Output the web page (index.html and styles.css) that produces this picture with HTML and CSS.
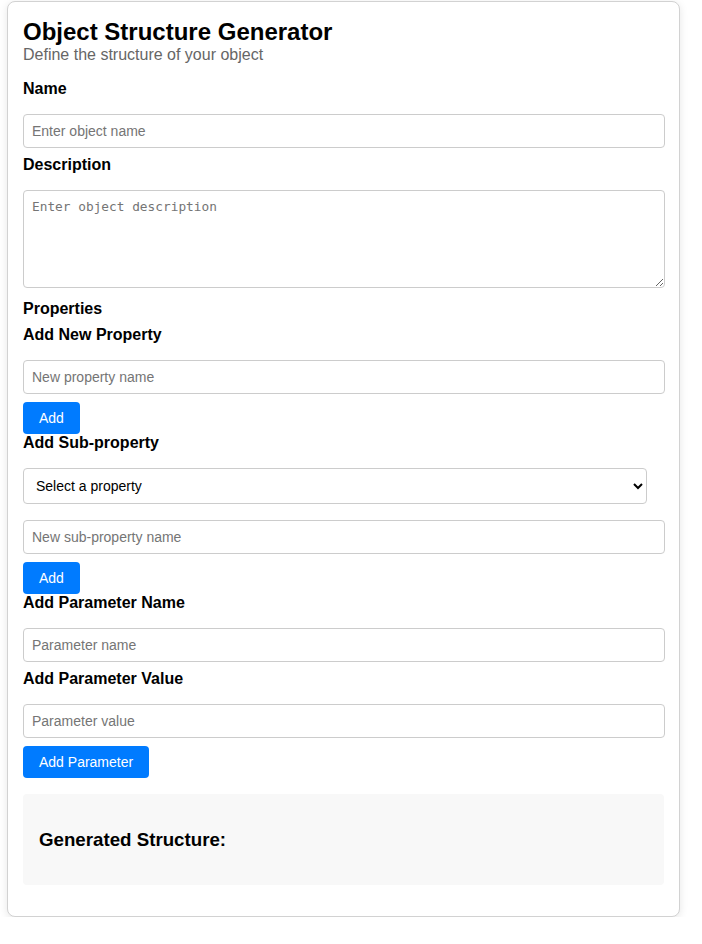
FILE: index.html
```html
<!DOCTYPE html>
<html lang="en">
<head>
<meta charset="utf-8">
<title>Object Structure Generator</title>
<link rel="stylesheet" href="styles.css">
</head>
<body>
<div class="card">
  <h1 class="title">Object Structure Generator</h1>
  <p class="subtitle">Define the structure of your object</p>

  <label class="label" for="name">Name</label>
  <input class="field" id="name" type="text" placeholder="Enter object name">

  <label class="label" for="desc">Description</label>
  <textarea class="field area" id="desc" placeholder="Enter object description"></textarea>

  <div class="section">Properties</div>

  <label class="label" for="prop">Add New Property</label>
  <input class="field" id="prop" type="text" placeholder="New property name">
  <button class="btn">Add</button>

  <label class="label" for="parent">Add Sub-property</label>
  <select class="select" id="parent">
    <option>Select a property</option>
  </select>
  <input class="field" type="text" placeholder="New sub-property name">
  <button class="btn">Add</button>

  <label class="label" for="pname">Add Parameter Name</label>
  <input class="field" id="pname" type="text" placeholder="Parameter name">

  <label class="label" for="pvalue">Add Parameter Value</label>
  <input class="field" id="pvalue" type="text" placeholder="Parameter value">
  <button class="btn">Add Parameter</button>

  <div class="output">
    <h3 class="output-title">Generated Structure:</h3>
  </div>
</div>
</body>
</html>
```

FILE: styles.css
```css
html, body {
  margin: 0;
  padding: 0;
  background: #ffffff;
}

body {
  font-family: "Liberation Sans", Arial, sans-serif;
  color: #000;
}

.card {
  box-sizing: border-box;
  width: 673px;
  margin: 1px 0 0 7px;
  padding: 16px 15px 15px;
  border: 1px solid #d2d2d2;
  border-radius: 8px;
  background: #fff;
  box-shadow: 0 2px 8px rgba(0, 0, 0, 0.1);
}

.title {
  margin: 0;
  font-size: 24px;
  font-weight: bold;
  line-height: 28px;
}

.subtitle {
  margin: 0 0 16px;
  font-size: 16px;
  line-height: 18px;
  color: #666;
}

.label {
  display: block;
  margin: 0 0 16px;
  font-size: 16px;
  font-weight: bold;
  line-height: 18px;
}

.section {
  margin: 0 0 8px;
  font-size: 16px;
  font-weight: bold;
  line-height: 18px;
}

.field {
  display: block;
  box-sizing: border-box;
  width: calc(100% + 1px);
  height: 34px;
  margin: 0 0 8px;
  padding: 8px;
  border: 1px solid #ccc;
  border-radius: 4px;
  font-family: "Liberation Sans", Arial, sans-serif;
  font-size: 14px;
  color: #000;
  background: #fff;
}

.field::placeholder {
  color: #757575;
}

.area {
  height: 98px;
  margin-bottom: 12px;
  font-family: "DejaVu Sans Mono", monospace;
  font-size: 12.8px;
  resize: vertical;
}

.select {
  display: block;
  box-sizing: border-box;
  width: 624px;
  height: 36px;
  margin: 0 0 16px;
  padding: 8px;
  border: 1px solid #ccc;
  border-radius: 4px;
  font-family: "Liberation Sans", Arial, sans-serif;
  font-size: 14px;
  color: #000;
  background: #fff;
}

.btn {
  display: block;
  height: 32px;
  margin: 0;
  padding: 0 16px;
  border: none;
  border-radius: 4px;
  background: #007bff;
  color: #fff;
  font-family: "Liberation Sans", Arial, sans-serif;
  font-size: 14px;
  cursor: pointer;
}

.output {
  margin: 16px 0;
  padding: 16px;
  background: #f8f8f8;
  border-radius: 4px;
}

.output-title {
  margin: 18.72px 0;
  font-size: 18.72px;
  font-weight: bold;
  line-height: 21.5px;
}
```
